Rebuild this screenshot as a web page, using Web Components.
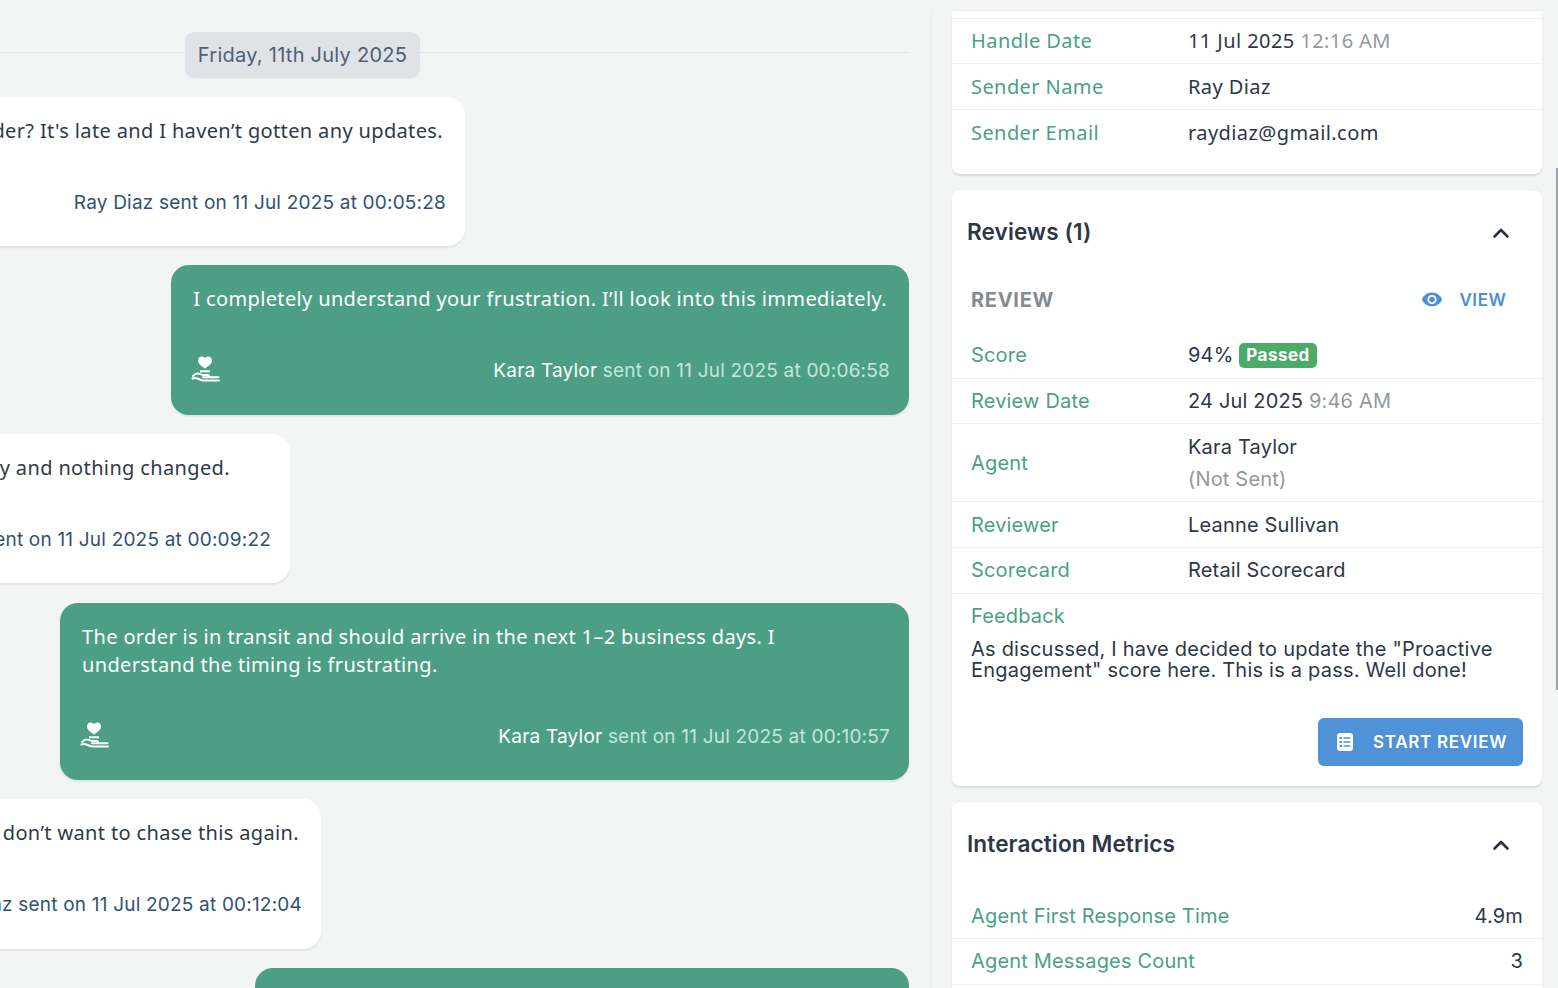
<!DOCTYPE html>
<html lang="en"><head><meta charset="utf-8"><title>Conversation review</title>
<style>
html,body{margin:0;height:988px;overflow:hidden;background:#f3f5f5;font-family:Inter,"Liberation Sans",sans-serif}
app-shell{height:988px}
</style></head><body>
<template id="hand"><svg width="30" height="30" viewBox="0 0 30 30" fill="none" stroke="#fff"><path d="M15 14.500C12 12.300 8 10 8 6.500 8 4 9.800 2.500 11.800 2.500c1.300 0 2.500.6 3.200 1.800.7-1.200 1.900-1.800 3.200-1.800C20.200 2.500 22 4 22 6.500c0 3.500-4 5.800-7 8z" fill="#fff" stroke="none"/><path d="M10 17.300h10" stroke-width="2"/><path d="M3 22c2-2.200 4.400-2.800 6.500-2.100l3.500 1.200h4.500c1 0 1.500.6 1.500 1.200M13 23.300h15.500M2.500 24.500c2-.6 3.500-.6 5 0 2 1 4 2 6 2H29" stroke-width="2" stroke-linecap="round"/></svg></template>

<script>
const def=(name,css,html,init)=>customElements.define(name,class extends HTMLElement{
  constructor(){super();this.attachShadow({mode:'open'}).innerHTML=`<style>${css}</style>${html}`}
  connectedCallback(){init&&init(this)}
});
def('app-shell',`:host{display:flex;position:relative;overflow:hidden}
.chat{flex:0 0 930px;box-sizing:border-box;height:988px;overflow:hidden}
.side{flex:1;box-sizing:border-box;height:988px;padding-top:11px;overflow:hidden;display:flex}
.rule{width:2px;background:#eef0f1;margin-right:20px}
.col{width:590px;display:flex;flex-direction:column;gap:16px}
.bar{position:absolute;right:0;top:168px;width:2px;height:522px;background:#9ea4a8}`,
`<div class="chat"><slot name="chat"></slot></div><div class="side"><div class="rule"></div><div class="col"><slot name="side"></slot></div></div><div class="bar"></div>`);
def('chat-thread',`:host{display:flex;flex-direction:column;gap:19px;width:1213px;margin-left:-304px;padding-top:32px;box-sizing:border-box}`,`<slot></slot>`);
def('chat-date',`:host{display:flex;align-items:center;height:46px}
i{flex:1;height:1px;background:#e1e4e7;margin-bottom:6px}
span{box-sizing:border-box;width:235px;height:46px;display:flex;align-items:center;justify-content:center;background:#dfe3e7;border-radius:9px;color:#4d6078;font-size:20px;letter-spacing:.26px;box-shadow:0 1px 1px rgba(0,0,0,.03)}`,`<i></i><span><slot></slot></span><i></i>`);
def('chat-bubble',`:host{display:block;box-sizing:border-box;padding:20px 22px 30px;border-radius:18px;background:#fff;color:#2d3a4a;box-shadow:0 2px 2px rgba(0,0,0,.07);align-self:flex-start}
:host([out]){align-self:flex-end;background:#4c9f85;color:#fff}
.t{font:20px/28px "Noto Sans",sans-serif;letter-spacing:.36px}
:host(:not([out])) .t{text-align:right;white-space:nowrap}
.m{display:flex;align-items:center;justify-content:space-between;height:28px;margin:43.450px -3px 0 0;font-size:19px;letter-spacing:.2px;color:#2f5272}
:host([out]) .m{color:#c4e6da}
.n{flex:1}.who{color:#fff}
:host(:not([out])) .who{color:inherit}
.ic{display:none;margin:2px 0 0 -3px}:host([out]) .ic{display:block}`,
`<div class="t"><slot></slot></div><div class="m"><span class="ic"></span><span class="n"></span><span class="txt"><span class="who"></span> <span class="rest"></span></span></div>`,
e=>{const s=e.shadowRoot;s.querySelector('.who').textContent=e.getAttribute('who');s.querySelector('.rest').textContent='sent on '+e.getAttribute('when');
 if(e.hasAttribute('out'))s.querySelector('.ic').append(document.getElementById('hand').content.cloneNode(true));
 if(e.hasAttribute('w'))e.style.width=e.getAttribute('w')+'px';
 if(e.hasAttribute('tr'))s.querySelector('.t').style.paddingRight=e.getAttribute('tr')+'px';});
def('side-card',`:host{display:block;background:#fff;border-radius:8px;box-shadow:0 2px 2px rgba(0,0,0,.1),0 -1px 1px rgba(0,0,0,.03)}
:host([clip]){border-radius:0 0 8px 8px;padding:7px 0 19px;font-family:"Noto Sans",sans-serif}
h2{margin:0;height:85px;box-sizing:border-box;padding:0 29px 1px 15px;display:flex;align-items:center;justify-content:space-between;font-size:22.600px;font-weight:600;color:#2d3748;letter-spacing:.1px}
h2:empty{display:none}
svg{margin-top:3px}`,
`<h2></h2><slot></slot>`,
e=>{const h=e.shadowRoot.querySelector('h2');if(e.hasAttribute('heading')&&!h.firstChild){h.innerHTML=`<span>${e.getAttribute('heading')}</span><svg width="24" height="24" viewBox="0 0 24 24" fill="none" stroke="#263040" stroke-width="2.600" stroke-linecap="round" stroke-linejoin="round"><path d="M5.500 15.500 12 9l6.500 6.500"/></svg>`}});
def('info-row',`:host{display:grid;grid-template-columns:217px 1fr;align-items:center;box-sizing:border-box;min-height:45.500px;padding:0 19px;border-top:1px solid #eff1f2;font-size:20px;letter-spacing:.17px;color:#2d3748}
:host([plain]){border-top:0}
:host([end]){grid-template-columns:1fr auto}
:host([nudge]){padding-top:1px}
:host([noto]){letter-spacing:.42px}
.l{color:#4a9f85}`,`<div class="l"><slot name="label"></slot></div><div><slot></slot></div>`);
def('review-head',`:host{display:flex;align-items:center;justify-content:space-between;height:50px;padding:0 35.500px 0 19px;margin-bottom:7.500px}
.r{font-size:20px;font-weight:700;letter-spacing:.7px;color:#858b90}
.v{display:flex;align-items:center;gap:16px;font-size:17px;font-weight:600;letter-spacing:.6px;color:#4a90d6}
svg{display:block;margin-top:-2px}`,`<span class="r">REVIEW</span><span class="v"><svg width="22" height="22" viewBox="0 0 24 24" fill="#4a90d6"><path d="M12 5C7 5 2.700 8.100 1 12.500 2.700 16.900 7 20 12 20s9.300-3.100 11-7.500C21.300 8.100 17 5 12 5zm0 12.500a5 5 0 1 1 0-10 5 5 0 0 1 0 10zm0-8a3 3 0 1 0 0 6 3 3 0 0 0 0-6z"/></svg>VIEW</span>`);
def('pass-badge',`:host{display:inline-flex;align-items:center;height:25px;padding:0 7px;border-radius:5px;background:#4dab69;color:#fff;font-size:17px;font-weight:700;letter-spacing:.5px;vertical-align:1px}`,`<slot></slot>`);
def('feedback-block',`:host{display:block;padding:0 19px;border-top:1px solid #eff1f2;color:#2d3748}
.l{height:45px;display:flex;align-items:center;color:#4a9f85;font-size:20px;letter-spacing:.17px}
p{margin:0;font-size:20px;line-height:21px;letter-spacing:.22px}`,`<div class="l">Feedback</div><p><slot></slot></p>`);
def('action-button',`:host{display:flex;justify-content:flex-end;padding:37px 19px 20px}
button{all:unset;box-sizing:border-box;width:205px;height:48px;display:flex;align-items:center;gap:20px;padding-left:19px;background:#4f92d8;border-radius:6px;color:#fff;font:600 17px Inter,sans-serif;letter-spacing:.7px}
svg{display:block}`,`<button><svg width="16" height="18" viewBox="0 0 16 18"><rect x="0" y="0" width="16" height="18" rx="3" fill="#fff"/><path d="M6.500 5h7M6.500 9h7M6.500 13h7" stroke="#4f92d8" stroke-width="1.400"/><path d="M2.500 5H5M2.500 9H5M2.500 13H5" stroke="#4f92d8" stroke-width="1.800"/></svg><slot></slot></button>`);
</script>

<app-shell>
  <chat-thread slot="chat">
    <chat-date>Friday, 11th July 2025</chat-date>
    <chat-bubble w="769" who="Ray Diaz" when="11 Jul 2025 at 00:05:28">Where is my order? It's late and I haven’t gotten any updates.</chat-bubble>
    <chat-bubble out who="Kara Taylor" when="11 Jul 2025 at 00:06:58">I completely understand your frustration. I’ll look into this immediately.</chat-bubble>
    <chat-bubble w="594" tr="38" style="margin-bottom:.65px" who="Ray Diaz" when="11 Jul 2025 at 00:09:22">I asked about it yesterday and nothing changed.</chat-bubble>
    <chat-bubble out style="width:849px" who="Kara Taylor" when="11 Jul 2025 at 00:10:57">The order is in transit and should arrive in the next 1–2 business days. I<br>understand the timing is frustrating.</chat-bubble>
    <chat-bubble w="625" who="Ray Diaz" when="11 Jul 2025 at 00:12:04">I just don’t want to chase this again.</chat-bubble>
    <chat-bubble out style="width:654px" who="Kara Taylor" when="11 Jul 2025 at 00:14:10">Thanks for your patience.</chat-bubble>
  </chat-thread>
  <side-card slot="side" clip>
    <info-row noto style="min-height:45px;padding-bottom:1px"><span slot="label">Handle Date</span>11 Jul 2025 <span style="color:#93989c">12:16 AM</span></info-row>
    <info-row noto style="min-height:46px"><span slot="label">Sender Name</span>Ray Diaz</info-row>
    <info-row noto><span slot="label">Sender Email</span>raydiaz@gmail.com</info-row>
  </side-card>
  <side-card slot="side" heading="Reviews (1)">
    <review-head></review-head>
    <info-row plain nudge><span slot="label">Score</span><span>94% <pass-badge>Passed</pass-badge></span></info-row>
    <info-row nudge style="min-height:45px"><span slot="label">Review Date</span>24 Jul 2025 <span style="color:#93989c">9:46 AM</span></info-row>
    <info-row nudge style="min-height:78px"><span slot="label">Agent</span><span style="display:block;line-height:32px">Kara Taylor<br><span style="color:#93989c">(Not Sent)</span></span></info-row>
    <info-row nudge style="min-height:46px"><span slot="label">Reviewer</span>Leanne Sullivan</info-row>
    <info-row style="min-height:46px"><span slot="label">Scorecard</span>Retail Scorecard</info-row>
    <feedback-block>As discussed, I have decided to update the "Proactive Engagement" score here. This is a pass. Well done!</feedback-block>
    <action-button>START REVIEW</action-button>
  </side-card>
  <side-card slot="side" heading="Interaction Metrics">
    <info-row plain end style="margin-top:7px;min-height:44px"><span slot="label">Agent First Response Time</span>4.9m</info-row>
    <info-row end style="min-height:46px"><span slot="label">Agent Messages Count</span>3</info-row>
    <info-row end><span slot="label">Customer Messages Count</span>3</info-row>
  </side-card>
</app-shell>
</body></html>
